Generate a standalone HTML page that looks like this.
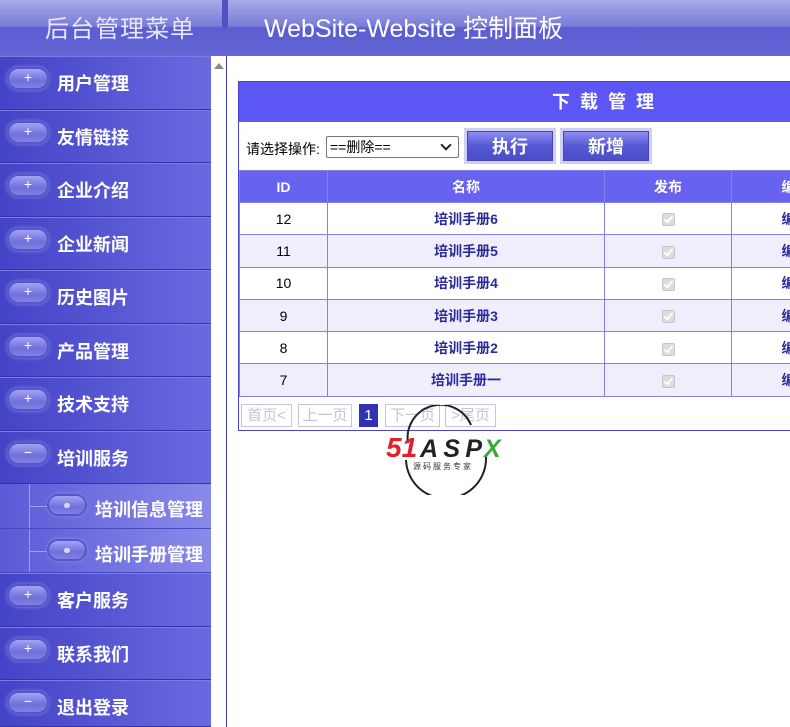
<!DOCTYPE html>
<html><head><meta charset="utf-8"><style>
*{margin:0;padding:0;box-sizing:border-box}
html,body{width:790px;height:727px;overflow:hidden}
body{background:#fff;font-family:"Liberation Sans","Noto Sans CJK SC",sans-serif;position:relative}
.hdr{position:absolute;left:0;top:0;width:790px;height:56px;background:linear-gradient(#a8aae9 0,#8f91e0 14px,#7a7cd8 26px,#5a5cd0 28px,#6567d6 56px)}
.hdr .sep{position:absolute;left:222px;top:0;width:6px;height:28px;background:#5052c4;border-radius:0 0 3px 3px}
.hdr .t1{position:absolute;left:45px;top:9px;font-size:24px;color:#e8e8ff;letter-spacing:1px}
.hdr .t2{position:absolute;left:264px;top:9px;font-size:25px;color:#fff}
.side{position:absolute;left:0;top:56px;width:211px;height:671px;overflow:hidden}
.it{background:linear-gradient(90deg,#4343c6,#6a6ae0);border-bottom:1px solid #3434a8;box-shadow:inset 0 1px 0 #7b7be6;position:relative;color:#fff;font-weight:bold;font-size:18px}
.it span{position:absolute;left:57px;top:14px}
.pill{position:absolute;left:9px;top:13px;width:38px;height:19px;border-radius:10px;background:linear-gradient(#a4a4f2,#7070dc 60%,#8080e4);box-shadow:0 0 0 2px #5656cc,0 0 3px 3px rgba(140,140,230,.6);color:#fff;font-size:14px;text-align:center;line-height:17px;font-weight:normal}
.sub{background:linear-gradient(90deg,#5a5ad6,#8a8aea);border-bottom:1px solid #4a4ac0;position:relative;color:#fff;font-weight:bold;font-size:18px}
.sub span{position:absolute;left:95px;top:12px}
.sub .vl{position:absolute;left:29px;top:0;width:1px;height:100%;background:#a0a0ee}
.sub .hl{position:absolute;left:29px;top:22px;width:20px;height:1px;background:#a0a0ee}
.sub .pill{left:49px;top:12px;width:36px;height:18px}
.sub .pill:after{content:"";position:absolute;left:15px;top:7px;width:6px;height:5px;border-radius:3px;background:#d8d8ff}
.scr{position:absolute;left:211px;top:56px;width:15px;height:671px;background:#fff}
.scr i{position:absolute;left:3px;top:7px;border:5px solid transparent;border-bottom:6px solid #888;border-top:0}
.vline{position:absolute;left:226px;top:56px;width:1px;height:671px;background:#3b3bb0}
.tbl{position:absolute;left:238px;top:81px;width:740px;border:1px solid #4a44d0}
.ttl{height:40px;background:#5c56f4;color:#fff;font-weight:bold;font-size:18px;text-align:center;letter-spacing:10px;line-height:40px}
.tool{height:48px;position:relative;font-size:14px}
.tool .lb{position:absolute;left:7px;top:17px}
.sel{position:absolute;left:87px;top:14px;width:133px;height:22px;border:1px solid #777;border-radius:2px;font-size:14px;padding-left:3px;line-height:20px}
.sel:after{content:"";position:absolute;right:8px;top:4px;width:6px;height:6px;border-right:2px solid #222;border-bottom:2px solid #222;transform:rotate(45deg)}
.btn{position:absolute;top:6px;width:92px;height:36px;background:#cfd0f2;padding:3px}
.btn div{width:100%;height:100%;background:linear-gradient(#8c8ef0,#5658d4 50%,#4c4ec8);color:#fff;font-weight:bold;font-size:18px;text-align:center;line-height:30px;border:1px solid #4446b8}
table.g{border-collapse:collapse;width:740px;table-layout:fixed}
table.g td{border:1px solid #8480ea;text-align:center;height:32.3px;font-size:14px;white-space:nowrap;overflow:hidden}
table.g tr.h td{background:#6862f0;color:#fff;font-weight:bold;height:32px}
table.g tr.a td{background:#f0eefc}
table.g td.n{color:#2c2a9c;font-weight:bold}
.cb{display:inline-block;width:13px;height:13px;background:#dcdcdc;border:1px solid #c8c8c8;border-radius:2px;vertical-align:middle;position:relative}
.cb:after{content:"";position:absolute;left:3px;top:0px;width:3px;height:7px;border-right:2px solid #fff;border-bottom:2px solid #fff;transform:rotate(40deg)}
.pg{height:33px;position:relative;font-size:15px}
.pg b{position:absolute;top:7px;height:23px;border:1px solid #c4c4e4;color:#c4c4d4;font-weight:normal;line-height:21px;padding:0 2px;text-align:center}
.logo{position:absolute;left:386px;top:405px;width:130px;height:90px}
</style></head><body>
<div class="hdr"><div class="sep"></div><div class="t1">后台管理菜单</div><div class="t2">WebSite-Website 控制面板</div></div>
<div class="side">
<div class="it" style="height:54px"><div class="pill">+</div><span>用户管理</span></div>
<div class="it" style="height:53px"><div class="pill">+</div><span>友情链接</span></div>
<div class="it" style="height:54px"><div class="pill">+</div><span>企业介绍</span></div>
<div class="it" style="height:53px"><div class="pill">+</div><span>企业新闻</span></div>
<div class="it" style="height:54px"><div class="pill">+</div><span>历史图片</span></div>
<div class="it" style="height:53px"><div class="pill">+</div><span>产品管理</span></div>
<div class="it" style="height:54px"><div class="pill">+</div><span>技术支持</span></div>
<div class="it" style="height:53px"><div class="pill">−</div><span>培训服务</span></div>
<div class="sub" style="height:45px"><div class="vl"></div><div class="hl"></div><div class="pill"></div><span>培训信息管理</span></div>
<div class="sub" style="height:44px"><div class="vl"></div><div class="hl"></div><div class="pill"></div><span>培训手册管理</span></div>
<div class="it" style="height:54px"><div class="pill">+</div><span>客户服务</span></div>
<div class="it" style="height:53px"><div class="pill">+</div><span>联系我们</span></div>
<div class="it" style="height:47px"><div class="pill">−</div><span>退出登录</span></div>
</div>
<div class="scr"><i></i></div>
<div class="vline"></div>
<div class="tbl">
<div class="ttl">下载管理</div>
<div class="tool"><span class="lb">请选择操作:</span><div class="sel">==删除==</div>
<div class="btn" style="left:225px"><div>执行</div></div>
<div class="btn" style="left:321px"><div>新增</div></div></div>
<table class="g">
<colgroup><col style="width:88px"><col style="width:277px"><col style="width:127px"><col style="width:128px"><col></colgroup>
<tr class="h"><td>ID</td><td>名称</td><td>发布</td><td>编辑</td><td>删除</td></tr>
<tr><td>12</td><td class="n">培训手册6</td><td><span class="cb"></span></td><td class="n">编辑</td><td class="n">删除</td></tr>
<tr class="a"><td>11</td><td class="n">培训手册5</td><td><span class="cb"></span></td><td class="n">编辑</td><td class="n">删除</td></tr>
<tr><td>10</td><td class="n">培训手册4</td><td><span class="cb"></span></td><td class="n">编辑</td><td class="n">删除</td></tr>
<tr class="a"><td>9</td><td class="n">培训手册3</td><td><span class="cb"></span></td><td class="n">编辑</td><td class="n">删除</td></tr>
<tr><td>8</td><td class="n">培训手册2</td><td><span class="cb"></span></td><td class="n">编辑</td><td class="n">删除</td></tr>
<tr class="a"><td>7</td><td class="n">培训手册一</td><td><span class="cb"></span></td><td class="n">编辑</td><td class="n">删除</td></tr>
</table>
<div class="pg"><b style="left:2px;width:51px">首页&lt;</b><b style="left:59px;width:54px">上一页</b><b style="left:120px;width:19px;background:#3232b4;color:#fff;border-color:#3232b4">1</b><b style="left:146px;width:55px">下一页</b><b style="left:206px;width:51px">&gt;尾页</b></div>
</div>
<svg class="logo" viewBox="0 0 130 90">
<path d="M22 38 A33 33 0 0 1 85 20" fill="none" stroke="#222" stroke-width="2"/>
<path d="M100 52 A33 33 0 0 1 20 55" fill="none" stroke="#222" stroke-width="2"/>
<text x="0" y="52" font-family="Liberation Sans,sans-serif" font-style="italic" font-weight="bold" font-size="28" fill="#e0202a">51</text>
<text x="34" y="52" font-family="Liberation Sans,sans-serif" font-style="italic" font-weight="bold" font-size="25" fill="#222" textLength="62">ASP</text>
<text x="98" y="52" font-family="Liberation Sans,sans-serif" font-style="italic" font-weight="bold" font-size="25" fill="#3aa838">X</text>
<text x="27" y="64" font-family="Noto Sans CJK SC,sans-serif" font-size="8" fill="#333" letter-spacing="2">源码服务专家</text>
</svg>
</body></html>
